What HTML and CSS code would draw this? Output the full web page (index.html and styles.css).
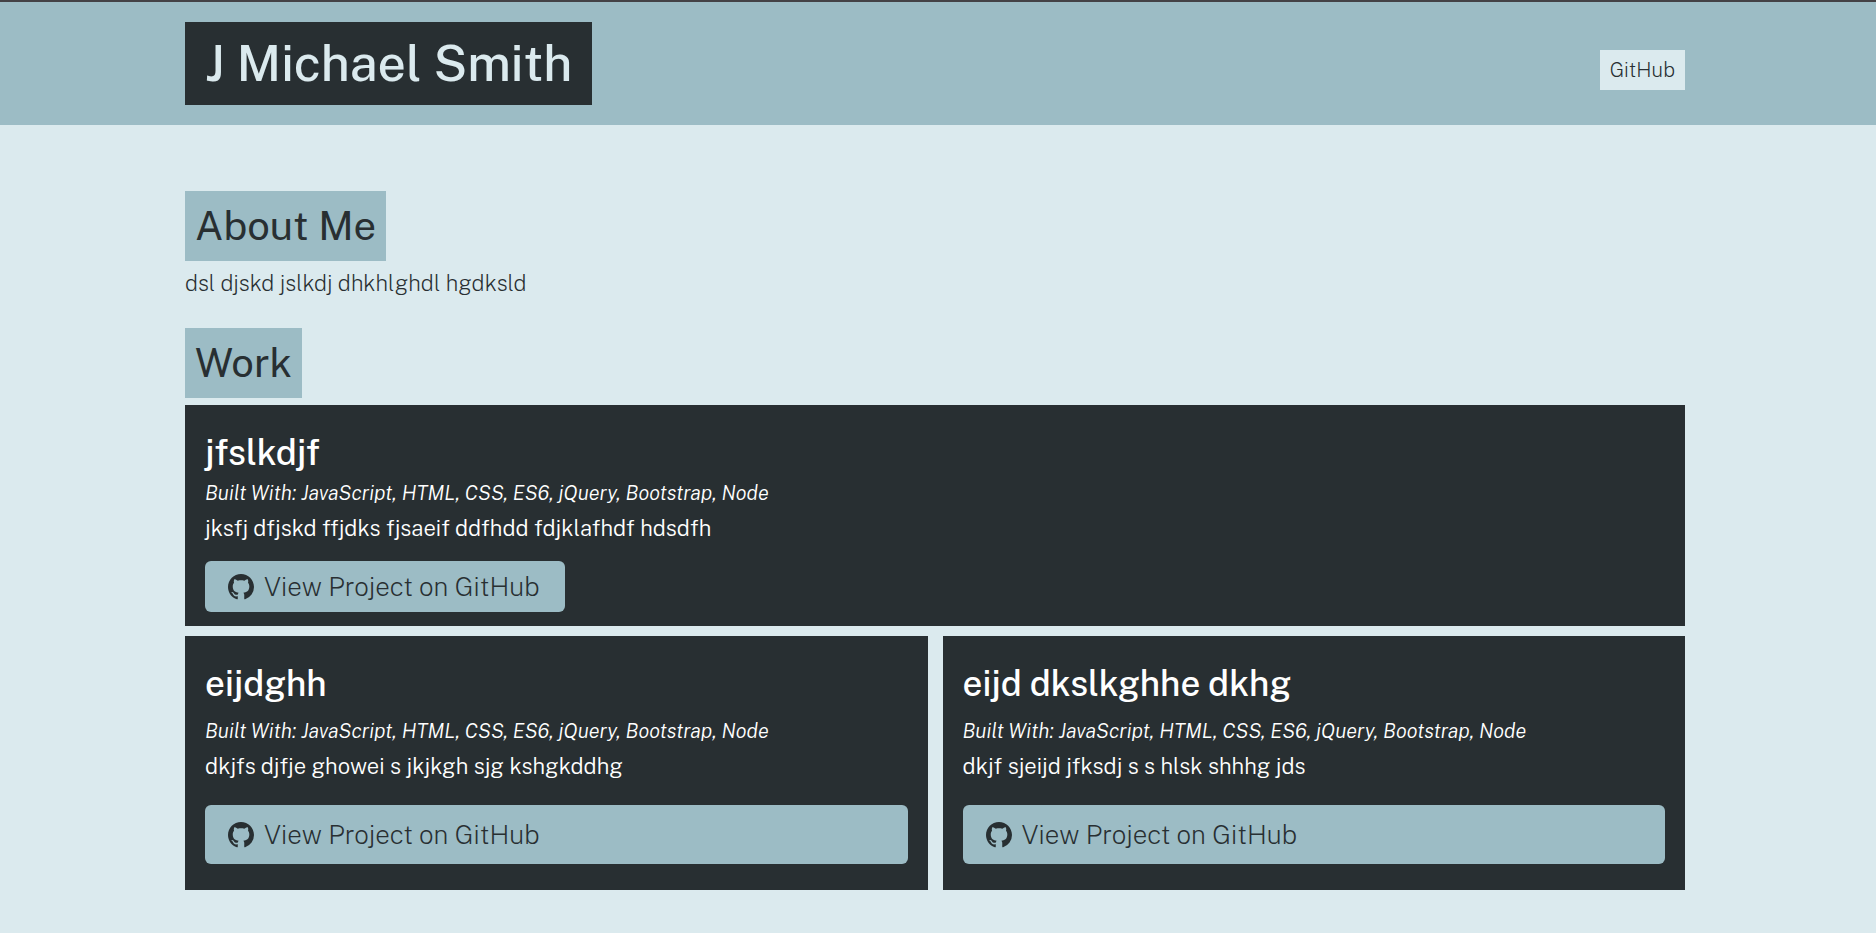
FILE: index.html
```html
<!DOCTYPE html>
<html lang="en">
<head>
<meta charset="utf-8">
<meta name="viewport" content="width=device-width, initial-scale=1">
<title>J Michael Smith</title>
<link rel="stylesheet" href="styles.css">
</head>
<body>
<svg class="sprite" aria-hidden="true">
  <symbol id="github" viewBox="0 0 16 16"><path d="M8 0C3.58 0 0 3.58 0 8c0 3.54 2.29 6.53 5.47 7.59.4.07.55-.17.55-.38 0-.19-.01-.82-.01-1.49-2.01.37-2.53-.49-2.69-.94-.09-.23-.48-.94-.82-1.13-.28-.15-.68-.52-.01-.53.63-.01 1.08.58 1.23.82.72 1.21 1.87.87 2.33.66.07-.52.28-.87.51-1.07-1.78-.2-3.64-.89-3.64-3.95 0-.87.31-1.59.82-2.15-.08-.2-.36-1.02.08-2.12 0 0 .67-.21 2.2.82.64-.18 1.32-.27 2-.27s1.36.09 2 .27c1.53-1.04 2.2-.82 2.2-.82.44 1.1.16 1.92.08 2.12.51.56.82 1.27.82 2.15 0 3.07-1.87 3.75-3.65 3.95.29.25.54.73.54 1.48 0 1.07-.01 1.93-.01 2.2 0 .21.15.46.55.38A8.01 8.01 0 0 0 16 8c0-4.42-3.58-8-8-8z"/></symbol>
</svg>
<header class="header">
  <div class="container header-row">
    <h1 class="site-title">J Michael Smith</h1>
    <nav class="nav"><a class="nav-link" href="#github-profile">GitHub</a></nav>
  </div>
</header>
<main class="container main">
  <section class="about">
    <h2 class="section-title">About Me</h2>
    <p class="about-text">dsl djskd jslkdj dhkhlghdl hgdksld</p>
  </section>
  <section class="work">
    <h2 class="section-title">Work</h2>
    <div class="projects">
      <article class="card card-featured">
        <h3 class="card-title">jfslkdjf</h3>
        <p class="built">Built With: JavaScript, HTML, CSS, ES6, jQuery, Bootstrap, Node</p>
        <p class="desc">jksfj dfjskd ffjdks fjsaeif ddfhdd fdjklafhdf hdsdfh</p>
        <a class="button" href="#project-1"><svg class="icon" aria-hidden="true"><use href="#github"/></svg>View Project on GitHub</a>
      </article>
      <article class="card">
        <h3 class="card-title">eijdghh</h3>
        <p class="built">Built With: JavaScript, HTML, CSS, ES6, jQuery, Bootstrap, Node</p>
        <p class="desc">dkjfs djfje ghowei s jkjkgh sjg kshgkddhg</p>
        <a class="button" href="#project-2"><svg class="icon" aria-hidden="true"><use href="#github"/></svg>View Project on GitHub</a>
      </article>
      <article class="card">
        <h3 class="card-title">eijd dkslkghhe dkhg</h3>
        <p class="built">Built With: JavaScript, HTML, CSS, ES6, jQuery, Bootstrap, Node</p>
        <p class="desc">dkjf sjeijd jfksdj s s hlsk shhhg jds</p>
        <a class="button" href="#project-3"><svg class="icon" aria-hidden="true"><use href="#github"/></svg>View Project on GitHub</a>
      </article>
    </div>
  </section>
</main>
</body>
</html>
```
FILE: styles.css
```css
:root {
  --dark: #282f32;
  --teal: #9cbcc5;
  --pale: #dbeaee;
}

* {
  box-sizing: border-box;
}

body {
  margin: 0;
  background: var(--pale);
  color: var(--dark);
  font-family: "Public Sans", Inter, "Liberation Sans", sans-serif;
  font-weight: 200;
}

h1, h2, h3, p {
  margin: 0;
}

a {
  color: inherit;
  text-decoration: none;
}

.sprite {
  display: none;
}

.container {
  margin: 0 191px 0 185px;
}

.header {
  border-top: 2px solid #444246;
  background: var(--teal);
  padding: 20px 0;
}

.header-row {
  display: flex;
  justify-content: space-between;
  align-items: flex-start;
}

.site-title {
  padding: 9px 20px 11px;
  background: var(--dark);
  color: var(--pale);
  font-size: 50px;
  line-height: 63px;
  font-weight: 500;
}

.nav {
  padding-top: 28px;
}

.nav-link {
  display: block;
  padding: 0 10px;
  background: var(--pale);
  font-size: 20px;
  line-height: 40px;
}

.main {
  padding: 66px 0 43px;
}

.section-title {
  width: fit-content;
  margin-bottom: 7px;
  padding: 10px;
  background: var(--teal);
  font-size: 40px;
  line-height: 50px;
  font-weight: 400;
}

.about {
  margin-bottom: 30px;
}

.about-text {
  font-size: 22px;
  line-height: 30px;
}

.projects {
  display: grid;
  grid-template-columns: 1fr 1fr;
  gap: 10px 15px;
}

.card {
  display: flex;
  flex-direction: column;
  padding: 28px 20px 26px;
  background: var(--dark);
  color: #fff;
}

.card-title {
  margin-bottom: 9px;
  font-size: 35px;
  line-height: 40px;
  font-weight: 500;
}

.built {
  font-size: 20px;
  line-height: 36px;
  font-weight: 300;
  font-style: italic;
}

.desc {
  margin-bottom: 22px;
  font-size: 22px;
  line-height: 34px;
  font-weight: 300;
}

.button {
  display: flex;
  align-items: center;
  gap: 10px;
  padding: 12px 25px 12px 23px;
  border-radius: 6px;
  background: var(--teal);
  color: var(--dark);
  font-size: 26px;
  line-height: 35px;
}

.icon {
  width: 26px;
  height: 26px;
  fill: currentColor;
}

.card-featured {
  grid-column: 1 / -1;
  align-items: flex-start;
  padding-bottom: 14px;
}

.card-featured .card-title {
  margin-bottom: 2px;
}

.card-featured .desc {
  margin-bottom: 16px;
}

.card-featured .button {
  padding-block: 8px;
}
```
